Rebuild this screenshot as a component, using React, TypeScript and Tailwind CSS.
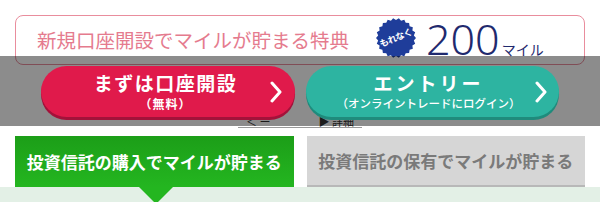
import React from 'react';

const font = { fontFamily: '"Noto Sans CJK JP", "Noto Sans", sans-serif' };

function Burst() {
  // zigzag-edged circle for the "もれなく" badge
  const pts: string[] = [];
  const n = 22;
  for (let i = 0; i < n * 2; i++) {
    const r = i % 2 === 0 ? 20 : 18;
    const a = (Math.PI * i) / n;
    pts.push(`${(20 + r * Math.cos(a)).toFixed(2)},${(20 + r * Math.sin(a)).toFixed(2)}`);
  }
  return (
    <div className="relative w-[40px] h-[40px] shrink-0">
      <svg width="40" height="40" viewBox="0 0 40 40" className="absolute inset-0">
        <polygon points={pts.join(' ')} fill="#1f3d9a" />
      </svg>
      <span className="absolute inset-0 flex items-center justify-center text-white text-[9px] font-bold -rotate-[22deg] tracking-[-0.5px]">
        もれなく
      </span>
    </div>
  );
}

function Chevron() {
  return (
    <svg width="12" height="22" viewBox="0 0 12 22" className="shrink-0">
      <path d="M2 2 L10 11 L2 20" fill="none" stroke="white" strokeWidth="3" strokeLinecap="round" strokeLinejoin="round" />
    </svg>
  );
}

export default function App() {
  return (
    <div className="relative w-[600px] h-[202px] overflow-hidden bg-white" style={font}>
      {/* campaign box */}
      <div className="mx-[15px] mt-[15px] h-[50px] border border-[#e98d9d] rounded-[8px] flex items-center pl-[21px]">
        <span className="text-[19.5px] text-[#e57b8e] leading-none whitespace-nowrap">新規口座開設でマイルが貯まる特典</span>
        <div className="ml-[27px] -mt-[4px]">
          <Burst />
        </div>
        <div className="ml-[10px] flex items-baseline text-[#1f2a6e] -mt-[4px]">
          <span className="text-[43px] leading-none font-light" style={{ fontFamily: '"Noto Sans", sans-serif' }}>200</span>
          <span className="text-[14px] leading-none ml-[2px]">マイル</span>
        </div>
      </div>

      {/* content hidden behind the overlay */}
      <div className="h-[71px] flex items-end justify-center pb-[8px]">
        <div className="flex items-center gap-[48px] border-b border-[#999] px-[8px] text-[11px] leading-none text-[#333]">
          <span>＜ ー</span>
          <span>▶ 詳細</span>
        </div>
      </div>

      {/* tabs */}
      <div className="flex gap-[13px] px-[15px]">
        <div className="relative w-[279px] h-[51px] bg-gradient-to-b from-[#1c9e18] to-[#24b620] flex items-center justify-center">
          <span className="text-white text-[17px] font-bold whitespace-nowrap">投資信託の購入でマイルが貯まる</span>
          <div className="absolute left-[124px] top-[51px] w-0 h-0 border-l-[17px] border-r-[17px] border-t-[17px] border-l-transparent border-r-transparent border-t-[#24b620]" />
        </div>
        <div className="w-[279px] h-[51px] bg-[#d6d6d6] border-b-2 border-[#b8b8b8] flex items-center justify-center">
          <span className="text-[#7a7a7a] text-[17px] font-bold whitespace-nowrap">投資信託の保有でマイルが貯まる</span>
        </div>
      </div>
      <div className="h-[15px] bg-[#e3f0e6]" />

      {/* overlay bar with the two call-to-action buttons */}
      <div className="absolute left-0 right-0 top-[56px] h-[70px] bg-black/45 flex gap-[11px] pl-[41px] pt-[10px]">
        <div className="w-[254px] h-[51px] rounded-full bg-[#e01a4b] shadow-[0_3px_0_#a3123a] flex items-center pl-[20px] pr-[13px]">
          <div className="flex-1 flex flex-col items-center text-white">
            <span className="text-[19px] leading-[20px] font-bold tracking-[1.5px]">まずは口座開設</span>
            <span className="text-[12px] leading-[13px] font-bold tracking-[1px] mt-[4px]">（無料）</span>
          </div>
          <Chevron />
        </div>
        <div className="w-[253px] h-[51px] rounded-full bg-[#2db4a1] shadow-[0_3px_0_#1f8b7c] flex items-center pl-[16px] pr-[12px]">
          <div className="flex-1 flex flex-col items-center text-white">
            <span className="text-[19px] leading-[20px] font-bold tracking-[3px]">エントリー</span>
            <span className="text-[11.5px] leading-[13px] font-medium mt-[4px] whitespace-nowrap">（オンライントレードにログイン）</span>
          </div>
          <Chevron />
        </div>
      </div>
    </div>
  );
}
